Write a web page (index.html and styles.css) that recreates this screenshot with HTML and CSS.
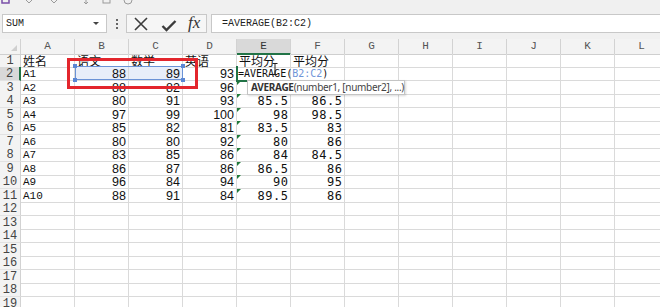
FILE: index.html
```html
<!DOCTYPE html>
<html lang="zh">
<head>
<meta charset="utf-8">
<title>AVERAGE</title>
<link rel="stylesheet" href="styles.css">
</head>
<body>
<div class="top">
  <svg class="qa" width="150" height="7" viewBox="0 0 150 7">
    <rect x="2" y="-3" width="7" height="6" fill="none" stroke="#7a4fa8" stroke-width="1.5"/>
    <path d="M26 0 L29 3 L32 0" fill="none" stroke="#9a9a9a" stroke-width="1"/>
    <path d="M51 0 L54 3 L57 0" fill="none" stroke="#9a9a9a" stroke-width="1"/>
    <path d="M86 0 V4 M84 2 L86 4 L88 2" fill="none" stroke="#9a9a9a" stroke-width="1"/>
    <rect x="103" y="-3" width="7" height="6" fill="none" stroke="#9a9a9a" stroke-width="1"/>
    <circle cx="128" cy="0" r="4" fill="none" stroke="#9a9a9a" stroke-width="1"/>
  </svg>
</div>
<div class="fbar">
  <div class="namebox"><span>SUM</span><span class="caret"></span></div>
  <div class="sep"><i></i><i></i><i></i></div>
  <div class="fxgroup">
    <svg class="ico" width="16" height="14" viewBox="0 0 16 14"><path d="M2 1 L14 13 M14 1 L2 13" stroke="#3c3c3c" stroke-width="1.6" fill="none"/></svg>
    <svg class="ico chk" width="16" height="14" viewBox="0 0 16 14"><path d="M1.5 8 L5.5 12 L14.5 3" stroke="#3c3c3c" stroke-width="2.4" fill="none"/></svg>
    <span class="fxl">fx</span>
  </div>
  <div class="formula">=AVERAGE(B2:C2)</div>
</div>
<div class="sheet">
  <div class="row hdr"><div class="corner"></div><div>A</div><div>B</div><div>C</div><div>D</div><div class="hsel">E</div><div>F</div><div>G</div><div>H</div><div>I</div><div>J</div><div>K</div><div>L</div></div>
  <div class="row"><div class="rh">1</div><div class="t">姓名</div><div class="t">语文</div><div class="t">数学</div><div class="t">英语</div><div class="t">平均分</div><div class="t">平均分</div><div></div><div></div><div></div><div></div><div></div><div></div></div>
  <div class="row"><div class="rh rsel">2</div><div class="a">A1</div><div class="n sel">88</div><div class="n sel">89</div><div class="n">93</div><div class="fx">=AVERAGE(<span class="ref">B2:C2</span>)</div><div></div><div></div><div></div><div></div><div></div><div></div><div></div></div>
  <div class="row"><div class="rh">3</div><div class="a">A2</div><div class="n">88</div><div class="n">82</div><div class="n">96</div><div class="m g"></div><div class="m"></div><div></div><div></div><div></div><div></div><div></div><div></div></div>
  <div class="row"><div class="rh">4</div><div class="a">A3</div><div class="n">80</div><div class="n">91</div><div class="n">93</div><div class="m g">85.5</div><div class="m">86.5</div><div></div><div></div><div></div><div></div><div></div><div></div></div>
  <div class="row"><div class="rh">5</div><div class="a">A4</div><div class="n">97</div><div class="n">99</div><div class="n">100</div><div class="m g">98</div><div class="m">98.5</div><div></div><div></div><div></div><div></div><div></div><div></div></div>
  <div class="row"><div class="rh">6</div><div class="a">A5</div><div class="n">85</div><div class="n">82</div><div class="n">81</div><div class="m g">83.5</div><div class="m">83</div><div></div><div></div><div></div><div></div><div></div><div></div></div>
  <div class="row"><div class="rh">7</div><div class="a">A6</div><div class="n">80</div><div class="n">80</div><div class="n">92</div><div class="m g">80</div><div class="m">86</div><div></div><div></div><div></div><div></div><div></div><div></div></div>
  <div class="row"><div class="rh">8</div><div class="a">A7</div><div class="n">83</div><div class="n">85</div><div class="n">86</div><div class="m g">84</div><div class="m">84.5</div><div></div><div></div><div></div><div></div><div></div><div></div></div>
  <div class="row"><div class="rh">9</div><div class="a">A8</div><div class="n">86</div><div class="n">87</div><div class="n">86</div><div class="m g">86.5</div><div class="m">86</div><div></div><div></div><div></div><div></div><div></div><div></div></div>
  <div class="row"><div class="rh">10</div><div class="a">A9</div><div class="n">96</div><div class="n">84</div><div class="n">94</div><div class="m g">90</div><div class="m">95</div><div></div><div></div><div></div><div></div><div></div><div></div></div>
  <div class="row"><div class="rh">11</div><div class="a">A10</div><div class="n">88</div><div class="n">91</div><div class="n">84</div><div class="m g">89.5</div><div class="m">86</div><div></div><div></div><div></div><div></div><div></div><div></div></div>
  <div class="row"><div class="rh">12</div><div></div><div></div><div></div><div></div><div></div><div></div><div></div><div></div><div></div><div></div><div></div><div></div></div>
  <div class="row"><div class="rh">13</div><div></div><div></div><div></div><div></div><div></div><div></div><div></div><div></div><div></div><div></div><div></div><div></div></div>
  <div class="row"><div class="rh">14</div><div></div><div></div><div></div><div></div><div></div><div></div><div></div><div></div><div></div><div></div><div></div><div></div></div>
  <div class="row"><div class="rh">15</div><div></div><div></div><div></div><div></div><div></div><div></div><div></div><div></div><div></div><div></div><div></div><div></div></div>
  <div class="row"><div class="rh">16</div><div></div><div></div><div></div><div></div><div></div><div></div><div></div><div></div><div></div><div></div><div></div><div></div></div>
  <div class="row"><div class="rh">17</div><div></div><div></div><div></div><div></div><div></div><div></div><div></div><div></div><div></div><div></div><div></div><div></div></div>
  <div class="row"><div class="rh">18</div><div></div><div></div><div></div><div></div><div></div><div></div><div></div><div></div><div></div><div></div><div></div><div></div></div>
  <div class="row"><div class="rh">19</div><div></div><div></div><div></div><div></div><div></div><div></div><div></div><div></div><div></div><div></div><div></div><div></div></div>

  <div class="selbox"><i class="h tl"></i><i class="h tr"></i><i class="h bl"></i><i class="h br"></i></div>
  <div class="active"></div>
  <div class="redbox"></div>
  <svg class="ibeam" width="6" height="12" viewBox="0 0 6 12"><path d="M0.5 0.5 H5.5 M3 0.5 V11.5 M0.5 11.5 H5.5" stroke="#222" stroke-width="1" fill="none"/></svg>
  <div class="tip"><b>AVERAGE</b>(number1, [number2], ...)</div>
</div>
</body>
</html>
```
FILE: styles.css
```css
html, body {
  margin: 0;
  padding: 0;
}
body {
  width: 660px;
  height: 307px;
  overflow: hidden;
  background: #f0f0f0;
  font-family: "Liberation Sans", Arial, sans-serif;
  color: #111;
}

/* quick access strip */
.top {
  height: 7px;
  overflow: hidden;
}
.qa {
  display: block;
}

/* formula bar */
.fbar {
  height: 32px;
  box-sizing: border-box;
  padding-top: 7px;
  display: flex;
  align-items: flex-start;
}
.namebox {
  margin-left: 2px;
  width: 105px;
  height: 19px;
  box-sizing: border-box;
  background: #fff;
  border: 1px solid #c8c8c8;
  display: flex;
  align-items: center;
  justify-content: space-between;
  padding: 0 7px 0 3px;
  font-family: "Liberation Mono", "Courier New", monospace;
  font-size: 10px;
  color: #222;
}
.caret {
  width: 0;
  height: 0;
  border-left: 3px solid transparent;
  border-right: 3px solid transparent;
  border-top: 3px solid #444;
}
.sep {
  width: 19px;
  height: 19px;
  display: flex;
  flex-direction: column;
  align-items: center;
  justify-content: center;
  gap: 2px;
}
.sep i {
  width: 2px;
  height: 2px;
  background: #666;
}
.fxgroup {
  width: 81px;
  height: 19px;
  box-sizing: border-box;
  border: 1px solid #c8c8c8;
  background: #f6f6f6;
  display: flex;
  align-items: center;
  padding-left: 6px;
}
.ico {
  display: block;
}
.chk {
  margin-top: 3px;
  margin-left: 12px;
}
.fxl {
  font-family: "Liberation Serif", "DejaVu Serif", serif;
  font-style: italic;
  font-size: 17px;
  color: #333;
  margin-left: 11px;
  margin-top: -2px;
}
.formula {
  margin-left: 4px;
  flex: 1;
  height: 19px;
  box-sizing: border-box;
  background: #fff;
  border: 1px solid #c8c8c8;
  border-right: none;
  padding-left: 10px;
  font-family: "Liberation Mono", "Courier New", monospace;
  font-size: 10px;
  line-height: 17px;
  color: #222;
}

/* sheet */
.sheet {
  position: relative;
  background: #fff;
}
.row {
  display: grid;
  grid-template-columns: 21px repeat(12, 54px);
  height: 13.5px;
}
.row > div {
  box-sizing: border-box;
  border-right: 1px solid #dadada;
  border-bottom: 1px solid #dadada;
  white-space: nowrap;
  font-size: 12px;
  line-height: 12px;
  padding: 1px 2px 0;
  overflow: visible;
}
.row.hdr {
  height: 14.5px;
}
.row.hdr > div {
  background: #f3f3f3;
  border-right-color: #d2d2d2;
  border-bottom-color: #cfcfcf;
  text-align: center;
  font-family: "Liberation Mono", "Courier New", monospace;
  font-size: 11px;
  line-height: 14px;
  padding-top: 0;
  color: #555;
}
.row.hdr > .hsel {
  background: #d9d9d9;
  border-bottom: 2px solid #217346;
  color: #333;
}
.row.hdr > .corner {
  position: relative;
}
.corner::after {
  content: "";
  position: absolute;
  right: 3px;
  bottom: 3px;
  border-left: 6px solid transparent;
  border-bottom: 6px solid #cfcfcf;
}
.row > .rh {
  background: #f3f3f3;
  border-right-color: #d2d2d2;
  border-bottom-color: #e2e2e2;
  text-align: center;
  padding: 1px 0 0;
  font-family: "Liberation Mono", "Courier New", monospace;
  font-size: 12px;
  color: #444;
}
.row > .rh.rsel {
  background: #d9d9d9;
  border-right: 2px solid #217346;
}
.row > .t {
  font-family: "Noto Sans CJK SC", sans-serif;
  font-size: 12px;
  color: #111;
}
.row > .a {
  font-family: "Liberation Mono", "Courier New", monospace;
  font-size: 11px;
  color: #111;
}
.row > .n {
  text-align: right;
  font-family: "Liberation Sans", Arial, sans-serif;
  font-size: 12.5px;
  color: #111;
}
.row > .m {
  text-align: right;
  font-family: "DejaVu Sans Mono", monospace;
  font-size: 12px;
  letter-spacing: 0.5px;
  padding-right: 1.5px;
  color: #111;
}
.row > .sel {
  background: #e8eef9;
}
.row > .fx {
  font-family: "DejaVu Sans Mono", monospace;
  font-size: 10px;
  color: #111;
  padding-left: 1px;
}
.ref {
  color: #6f95d8;
}
.g {
  position: relative;
}
.g::before {
  content: "";
  position: absolute;
  left: 0;
  top: 0;
  border-top: 4px solid #1f7a3a;
  border-right: 4px solid transparent;
}

/* overlays */
.selbox {
  position: absolute;
  left: 75px;
  top: 27px;
  width: 108px;
  height: 14px;
  box-sizing: border-box;
  border: 1px solid #6b93d6;
}
.h {
  position: absolute;
  width: 4px;
  height: 4px;
  background: #5b87d4;
}
.h.tl { left: -3px; top: -3px; }
.h.tr { right: -3px; top: -3px; }
.h.bl { left: -3px; bottom: -3px; }
.h.br { right: -3px; bottom: -3px; }
.active {
  position: absolute;
  left: 236px;
  top: 27px;
  width: 54px;
  height: 16px;
  box-sizing: border-box;
  border-left: 2px solid #217346;
  border-bottom: 2px solid #217346;
}
.redbox {
  position: absolute;
  left: 67px;
  top: 19px;
  width: 131px;
  height: 31px;
  box-sizing: border-box;
  border: 3px solid #e3262d;
}
.ibeam {
  position: absolute;
  left: 272px;
  top: 24px;
}
.tip {
  position: absolute;
  left: 247px;
  top: 41px;
  width: 158px;
  height: 15px;
  box-sizing: border-box;
  background: #fff;
  border: 1px solid #c4c4c4;
  box-shadow: 1px 1px 2px rgba(0, 0, 0, 0.15);
  padding-left: 3px;
  font-family: "Noto Sans", sans-serif;
  font-size: 10px;
  line-height: 13px;
  letter-spacing: -0.3px;
  color: #444;
  white-space: nowrap;
}
.tip b {
  color: #333;
  font-weight: 700;
}
```
